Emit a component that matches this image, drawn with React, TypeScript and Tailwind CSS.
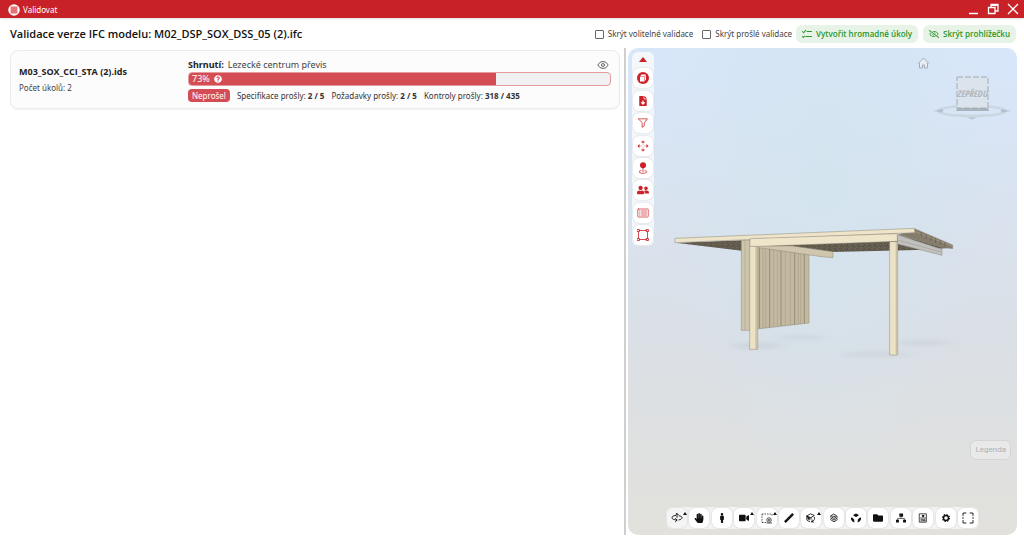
import { useState, type ReactNode } from "react";
import {
  FaFileDownload,
  FaFolder,
  FaHandPaper,
  FaMale,
  FaQuestionCircle,
  FaRegEyeSlash,
  FaUserFriends,
  FaVideo,
} from "react-icons/fa";
import { LuEye } from "react-icons/lu";
import { clsx } from "clsx";

type Tool = {
  label: string;
  icon: ReactNode;
  menu?: boolean;
  active?: boolean;
};

const stroke = {
  fill: "none",
  stroke: "currentColor",
  strokeLinecap: "round" as const,
  strokeLinejoin: "round" as const,
};

const sideTools: Tool[] = [
  {
    label: "Model",
    icon: (
      <svg viewBox="0 0 24 24" className="size-3">
        <circle cx="12" cy="12" r="12" fill="currentColor" />
        <path d="M6 9l3-4h9v10l-3 4H6z" fill="#fff" />
        <path d="M6 9h9v10M15 9l3-4" fill="none" stroke="#cc2128" strokeWidth="1" />
      </svg>
    ),
  },
  { label: "Stáhnout soubor", icon: <FaFileDownload className="size-2.5" /> },
  {
    label: "Filtr",
    icon: (
      <svg viewBox="0 0 24 24" className="size-2.5" {...stroke} strokeWidth="1.8">
        <path d="M1.500 2h21L15 12v7l-5 3.500V12z" />
      </svg>
    ),
  },
  {
    label: "Posun",
    icon: (
      <svg viewBox="0 0 24 24" className="size-3" fill="currentColor">
        <path d="M12 1l4 4H8zM12 23l4-4H8zM1 12l4-4v8zM23 12l-4-4v8z" />
        <path
          d="M12 5v4M12 15v4M5 12h4M15 12h4"
          stroke="currentColor"
          strokeWidth="1.500"
          strokeDasharray="2 1"
        />
      </svg>
    ),
  },
  {
    label: "Poloha",
    icon: (
      <svg viewBox="0 0 24 24" className="size-3">
        <circle cx="12" cy="6.500" r="6" fill="currentColor" />
        <path d="M12 10v9M8 17c-6 1-5 5.500 4 5.500S22 18 16 17" {...stroke} strokeWidth="1.6" />
      </svg>
    ),
  },
  { label: "Uživatelé", icon: <FaUserFriends className="size-3" /> },
  {
    label: "Seznam",
    icon: (
      <svg viewBox="0 0 24 24" className="size-3" {...stroke} strokeWidth="1.4">
        <rect x="1.500" y="4" width="21" height="16" rx="1.500" />
        <path d="M5 8h1M9 8h10M5 12h1M9 12h10M5 16h1M9 16h10" />
      </svg>
    ),
  },
  {
    label: "Výběr oblasti",
    icon: (
      <svg viewBox="0 0 24 24" className="size-3" {...stroke} strokeWidth="1.6">
        <path d="M5 3h14M5 21h14M3 5v14M21 5v14" />
        <path d="M1 1h4v4H1zM19 1h4v4h-4zM1 19h4v4H1zM19 19h4v4h-4z" />
      </svg>
    ),
  },
];

const viewerTools: Tool[] = [
  {
    label: "Orbita",
    menu: true,
    active: true,
    icon: (
      <svg viewBox="0 0 24 24" className="size-3" {...stroke} strokeWidth="1.8">
        <path d="M9 7C4 7.500 2 9 2 11.500c0 3 5 4.500 10 4.500M16 7.500c4 .5 6 2 6 4 0 2-2 3.500-6 4.300M9 13l3 3-3 3.500" />
        <path d="M12 3v8M9.500 5.500L12 3l2.500 2.500" />
      </svg>
    ),
  },
  { label: "Posunout", icon: <FaHandPaper className="size-2.5" /> },
  { label: "Z pohledu osoby", icon: <FaMale className="size-2.5" /> },
  { label: "Kamera", menu: true, icon: <FaVideo className="size-2.5" /> },
  {
    label: "Výběr",
    menu: true,
    icon: (
      <svg viewBox="0 0 24 24" className="size-3" fill="none" stroke="currentColor" strokeWidth="1.4">
        <path d="M2 4h20M2 4v17M2 21h8M22 4v5" strokeDasharray="3 2" />
        <circle cx="16" cy="16" r="4.500" />
        <circle cx="16" cy="16" r="1.500" />
        <path d="M11 22h11" />
      </svg>
    ),
  },
  {
    label: "Měření",
    icon: (
      <svg viewBox="0 0 24 24" className="size-3">
        <path d="M2 18.500L18.500 2 22 5.500 5.500 22z" fill="currentColor" />
        <path d="M15 5.500l1.500 1.500M12 8.500l1.500 1.500M9 11.500l1.500 1.500M6 14.500L7.500 16" stroke="#777" />
      </svg>
    ),
  },
  {
    label: "Řez",
    menu: true,
    icon: (
      <svg viewBox="0 0 24 24" className="size-2.5" {...stroke} strokeWidth="2">
        <path d="M2 7l9-5 9 4-8 5zM2 7v10l7 4M12 11v4" />
        <path d="M5 9l3 2v5l-3-2z" fill="currentColor" />
        <path d="M20 10c2 4 0 9-6 11M14 21l1-4M14 21l4 1" />
      </svg>
    ),
  },
  {
    label: "Vrstvy",
    icon: (
      <svg viewBox="0 0 24 24" className="size-2.5" {...stroke} strokeWidth="2">
        <path d="M12 3l8 5-8 5-8-5zM4 12l8 5 8-5M4 16l8 5 8-5M9 8h6" />
      </svg>
    ),
  },
  {
    label: "Rozložit model",
    icon: (
      <svg viewBox="0 0 24 24" className="size-3" fill="currentColor">
        <path d="M12 3l5 2.500v2L12 10 7 7.500v-2zM2 11l3 .5 3.500 4v5.500l-3.500-2-3-4zM22 11l-3 .5-3.500 4v5.500l3.500-2 3-4z" />
      </svg>
    ),
  },
  { label: "Složka", icon: <FaFolder className="size-2.5" /> },
  {
    label: "Struktura modelu",
    icon: (
      <svg viewBox="0 0 24 24" className="size-2.5" fill="currentColor">
        <path d="M8 1h9v8H8zM0 16h7v7H0zM17 16h7v7h-7z" />
        <path d="M12 9v4M4 17v-4h16v4" fill="none" stroke="currentColor" strokeWidth="1.500" />
      </svg>
    ),
  },
  {
    label: "Vlastnosti",
    icon: (
      <svg viewBox="0 0 24 24" className="size-2.5" {...stroke} strokeWidth="1.8">
        <path d="M4 2h16v20H4zM6 12h12M7 16h4M7 19h4M14 16h3v3h-3z" />
        <circle cx="12" cy="7" r="2" fill="currentColor" />
      </svg>
    ),
  },
  {
    label: "Nastavení",
    icon: (
      <svg viewBox="0 0 24 24" className="size-2.5" fill="none" stroke="currentColor">
        <circle cx="12" cy="12" r="6" strokeWidth="3.500" />
        <circle cx="12" cy="12" r="8.500" strokeWidth="2.500" strokeDasharray="3.340 3.340" />
      </svg>
    ),
  },
  {
    label: "Celá obrazovka",
    icon: (
      <svg viewBox="0 0 24 24" className="size-3" {...stroke} strokeWidth="1.8">
        <path d="M2 7V2h6M16 2h6v5M22 17v5h-6M8 22H2v-5M2 11v2M22 11v2" />
      </svg>
    ),
  },
];

const stats = [
  { label: "Specifikace prošly:", value: "2 / 5" },
  { label: "Požadavky prošly:", value: "2 / 5" },
  { label: "Kontroly prošly:", value: "318 / 435" },
];

const planks = [298, 309, 317, 329, 341, 352, 363, 376, 391, 404, 415, 422, 433];

function TitleBar() {
  return (
    <header className="flex h-[18px] shrink-0 items-center bg-[#c82128] pr-[5px] pl-2 text-white shadow-sm">
      <svg viewBox="0 0 24 24" className="mt-0.5 mr-[3px] size-3">
        <circle cx="12" cy="12" r="11.500" fill="#fff" />
        <path d="M6 5h12v14H6z" fill="#f08a8e" />
        <path d="M6 5v14M10 5v14M14 5v14M18 5v14" stroke="#dc3a40" strokeWidth="1.200" />
      </svg>
      <span className="mt-0.5 text-[8px] leading-3">Validovat</span>
      <div className="ml-auto flex items-center gap-2">
        <button type="button" aria-label="Minimalizovat">
          <svg viewBox="0 0 12 12" className="size-3" fill="none" stroke="currentColor" strokeWidth="1.500">
            <path d="M2 10.500h9" />
          </svg>
        </button>
        <button type="button" aria-label="Obnovit">
          <svg viewBox="0 0 12 12" className="size-3" fill="none" stroke="currentColor" strokeWidth="1.300">
            <path d="M1.500 4.500h6.500v6H1.500zM4 4V1.500h7V8H8M4 2.300h7" />
          </svg>
        </button>
        <button type="button" aria-label="Zavřít">
          <svg viewBox="0 0 12 12" className="size-3" fill="none" stroke="currentColor" strokeWidth="1.300">
            <path d="M1 1l10 10M11 1L1 11" />
          </svg>
        </button>
      </div>
    </header>
  );
}

function Check({ label }: { label: string }) {
  return (
    <label className="flex items-center gap-1 text-[8px] leading-3 text-[#444]">
      <input
        type="checkbox"
        className="size-[9px] appearance-none rounded-[1px] border border-[#666] bg-white checked:bg-[#c82128]"
      />
      {label}
    </label>
  );
}

function ValidationCard() {
  return (
    <article className="flex items-center rounded-lg border border-[#ececec] bg-[#fcfcfc] px-2 py-1.5 shadow-xs">
      <div className="w-[169px] shrink-0">
        <h2 className="font-['Open_Sans',sans-serif] text-[9px] leading-4 font-bold">M03_SOX_CCI_STA (2).ids</h2>
        <p className="text-[8px] leading-4 text-[#444]">Počet úkolů: 2</p>
      </div>
      <div className="min-w-0 flex-1">
        <div className="flex items-center gap-1 text-[9px] leading-[15px]">
          <strong>Shrnutí:</strong>
          <span className="text-[#444]">Lezecké centrum převis</span>
          <button type="button" aria-label="Zobrazit" className="mr-0.5 ml-auto text-[#666]">
            <LuEye className="size-3" />
          </button>
        </div>
        <div className="h-3.5 overflow-hidden rounded-sm border border-[#e59a9e] bg-[#f2f1f1]">
          <div
            className="flex h-full items-center gap-1 bg-[#d54d54] pl-[3px] text-[9px] leading-3 text-white"
            style={{ width: "73%" }}
          >
            73%
            <FaQuestionCircle className="size-2" />
          </div>
        </div>
        <div className="mt-[3px] flex items-center gap-[7px] text-[8px] leading-[13px] text-[#333]">
          <span className="rounded-sm bg-[#d54d54] px-1 text-white">Neprošel</span>
          {stats.map((s) => (
            <span key={s.label}>
              {s.label} <b>{s.value}</b>
            </span>
          ))}
        </div>
      </div>
    </article>
  );
}

function ToolButton({ tool }: { tool: Tool }) {
  return (
    <button
      type="button"
      aria-label={tool.label}
      className={clsx(
        "relative flex size-5 items-center justify-center rounded-md shadow-[0_0_2px_rgba(0,0,0,0.18)]",
        tool.active ? "bg-[#f5f5f5]" : "bg-white",
      )}
    >
      {tool.icon}
      {tool.menu && (
        <svg viewBox="0 0 4 3" className="absolute top-1 right-0 h-[3px] w-1">
          <path d="M0 3l2-3 2 3z" fill="currentColor" />
        </svg>
      )}
    </button>
  );
}

function Model() {
  return (
    <svg viewBox="0 0 930 450" className="absolute top-[172px] left-8 w-[310px] overflow-visible">
      <defs>
        <pattern id="gravel" width="17" height="13" patternUnits="userSpaceOnUse">
          <rect width="17" height="13" fill="#5e584b" />
          <path d="M1 2h3M9 4h4M4 7h3M13 9h3M7 11h3" stroke="#8d8473" strokeWidth="2.500" />
          <path d="M5 3h3M0 10h3M11 7h3M14 1h2" stroke="#3e3a31" strokeWidth="2.500" />
        </pattern>
        <filter id="soft" x="-50%" y="-200%" width="200%" height="500%">
          <feGaussianBlur stdDeviation="20 6" />
        </filter>
      </defs>
      <g fill="#a9b0b8" opacity="0.3" filter="url(#soft)">
        <ellipse cx="290" cy="377" rx="80" ry="7" />
        <ellipse cx="425" cy="353" rx="65" ry="5" />
        <ellipse cx="650" cy="403" rx="110" ry="5" />
        <ellipse cx="790" cy="368" rx="80" ry="6" />
      </g>
      <path d="M46 68L245 92 520 96 770 90 870 84 710 45z" fill="url(#gravel)" />
      <g stroke="#8c887a" strokeWidth="1.500">
        <path d="M244 60h26v271h-26z" fill="#cdc4ac" />
        <path d="M290 80l157 24v205l-157 18z" fill="#c3b9a1" />
        <path d="M288 78l110 0 121 17v18l-34-3-190-27z" fill="#cfc6ad" />
        <path d="M712 44l134 44v18l-134-34z" fill="#bfc0bf" />
        <path d="M764 26l114 49v11l-40-6-122-36z" fill="#857c6b" />
        <path d="M45 55L764 25v13L45 68z" fill="#ede4c9" />
        <path d="M270 56l442-15v23l-442 16z" fill="#efe5ca" />
        <path d="M269 79h24v309h-24z" fill="#ece3c7" />
        <path d="M689 65h24v340h-24z" fill="#ece3c7" />
      </g>
      <path d="M289 80v307M710 66v338" stroke="#bdb399" strokeWidth="6" opacity="0.7" />
      {planks.map((x, i) => (
        <path
          key={x}
          d={`M${x} ${82 + (x - 290) / 7}V${326 - (x - 290) / 9}`}
          stroke={i % 3 ? "#aca28b" : "#968d78"}
          strokeWidth={i % 3 ? 2 : 3}
        />
      ))}
      <path d="M255 62v268" stroke="#a59c86" strokeWidth="1.500" />
      <path d="M764 34l112 44M712 60l132 36" stroke="#a9a18d" fill="none" strokeWidth="2" />
      <path d="M784 36v12M799 43v13M813 49v13M827 55v14M841 61v13M855 67v13" stroke="#5f584b" strokeWidth="2" />
    </svg>
  );
}

function ViewCube() {
  return (
    <div className="absolute top-2 right-1 w-24">
      <svg viewBox="0 0 96 64" className="w-full" fill="none">
        <path d="M1 7.500L6.500 2 12 7.500M2.500 7v5h3V9h2v3h3V7" stroke="#a3abb8" fill="#e8edf3" />
        <ellipse cx="55" cy="55" rx="34" ry="5" stroke="#c8d7e2" strokeWidth="2.500" />
        <path d="M16 55l10-2v3.500zM94 55l-10-2v3.500zM50 61.500h10l-5 2z" fill="#b3c1cd" />
        <path d="M40 52h31l1 3H39z" fill="#aab4bd" />
        <rect x="40" y="21" width="31" height="31" fill="#dbe4ec" stroke="#a3abb3" strokeDasharray="6 2" />
        <text
          x="55"
          y="41"
          textAnchor="middle"
          fontSize="9"
          fontWeight="700"
          fontStyle="italic"
          fontFamily="'Open Sans Condensed', 'Liberation Sans', sans-serif"
          fill="#afb6bd"
        >
          ZEPŘEDU
        </text>
      </svg>
    </div>
  );
}

function Viewer() {
  return (
    <section
      aria-label="Prohlížeč modelu"
      className="relative min-h-0 flex-1 overflow-hidden rounded-[10px] bg-linear-to-b from-[#d8e6f9] from-5% via-[#dadfe5] via-60% to-[#e2e1dc]"
    >
      <div className="absolute inset-0 bg-radial-[at_50%_26%] from-[#d2e4ee]/80 to-transparent to-60%" />
      <Model />
      <ViewCube />
      <div className="absolute top-1 left-1 flex h-[194px] w-[22px] flex-col items-center justify-between rounded-md bg-[#f5f8fb] pb-px text-[#cc2128]">
        <button type="button" aria-label="Sbalit" className="flex h-3.5 w-full items-center justify-center">
          <svg viewBox="0 0 8 5" className="h-[5px] w-2">
            <path d="M0 5l4-5 4 5z" fill="currentColor" />
          </svg>
        </button>
        {sideTools.map((tool) => (
          <ToolButton key={tool.label} tool={tool} />
        ))}
      </div>
      <button
        type="button"
        className="absolute right-1.5 bottom-[75px] h-5 rounded-md border border-[#d3d4d5] bg-[#e9e9e9] px-1 font-['Roboto',sans-serif] text-[8px] text-[#aeb0b2]"
      >
        Legenda
      </button>
      <div className="absolute inset-x-0 bottom-1.5 mx-auto flex h-[22px] w-[313px] items-center justify-between rounded-md bg-[#f3f3f1] px-px text-[#111]">
        {viewerTools.map((tool) => (
          <ToolButton key={tool.label} tool={tool} />
        ))}
      </div>
    </section>
  );
}

export default function App() {
  const [viewerOpen, setViewerOpen] = useState(true);

  return (
    <div className="flex h-screen flex-col bg-white font-['Noto_Sans',sans-serif] text-[#222]">
      <TitleBar />
      <div className="flex h-8 shrink-0 items-center pr-2 pl-2.5">
        <h1 className="font-['Open_Sans',sans-serif] text-[11px] leading-4 font-semibold text-[#111]">
          Validace verze IFC modelu: M02_DSP_SOX_DSS_05 (2).ifc
        </h1>
        <div className="ml-auto flex items-center gap-[9px]">
          <Check label="Skrýt volitelné validace" />
          <Check label="Skrýt prošlé validace" />
        </div>
        <div className="ml-1 flex gap-[5px] font-['Open_Sans',sans-serif] text-[8px] font-semibold text-[#2a962b]">
          <button type="button" className="flex h-[18px] items-center gap-1 rounded-md bg-[#e7f3e7] px-1.5">
            <svg viewBox="0 0 24 24" className="size-2.5" {...stroke} strokeWidth="2.500">
              <path d="M1 6l3 3 5-6M12 6h11M9 18h14M1 18l2 2 3-3" />
            </svg>
            Vytvořit hromadné úkoly
          </button>
          <button
            type="button"
            onClick={() => setViewerOpen(!viewerOpen)}
            className="flex h-[18px] items-center gap-1 rounded-md bg-[#e7f3e7] px-1.5"
          >
            <FaRegEyeSlash className="size-2.5" />
            Skrýt prohlížečku
          </button>
        </div>
      </div>
      <main className="-mt-0.5 flex min-h-0 flex-1">
        <section className="min-w-0 flex-[610] overflow-auto pt-0.5 pr-1 pb-3 pl-2.5">
          <ValidationCard />
        </section>
        {viewerOpen && (
          <aside className="flex min-w-0 flex-[393] pr-[7px] pb-[15px]">
            <div className="mr-0.5 w-0.5 bg-[#cfcfcf]" />
            <Viewer />
          </aside>
        )}
      </main>
    </div>
  );
}
